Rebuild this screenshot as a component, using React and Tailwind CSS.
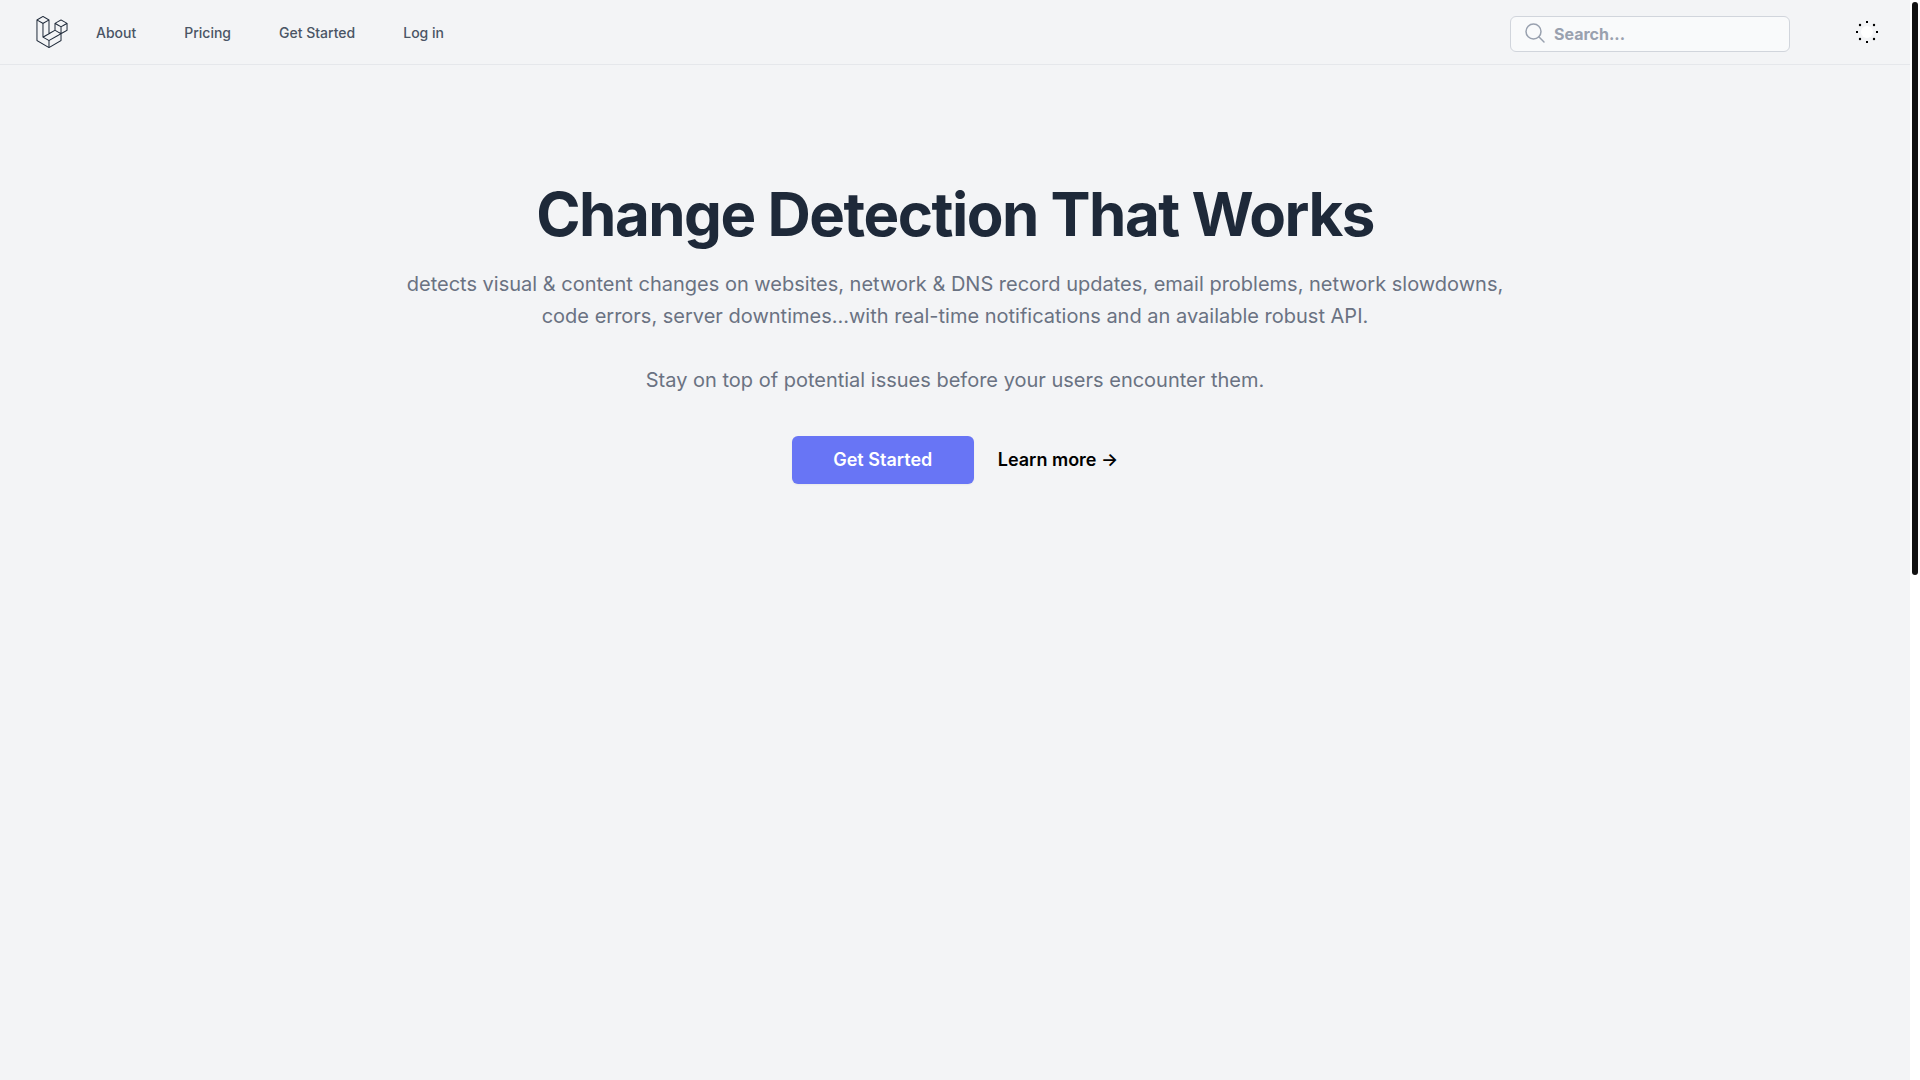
import { useState } from 'react';
import { SiLaravel } from 'react-icons/si';

const navLinks = [
    { label: 'About', href: '#about' },
    { label: 'Pricing', href: '#pricing' },
    { label: 'Get Started', href: '#get-started' },
    { label: 'Log in', href: '#login' },
];

function SearchIcon() {
    return (
        <svg className="size-6 shrink-0 text-gray-400" viewBox="0 0 24 24" fill="none" stroke="currentColor" strokeWidth="1.5" strokeLinecap="round" aria-hidden="true">
            <circle cx="10.5" cy="9.5" r="7.5" />
            <path d="m21 20-5.2-5.2" />
        </svg>
    );
}

function SunIcon() {
    return (
        <svg className="size-6" viewBox="0 0 24 24" aria-hidden="true">
            <circle cx="12" cy="12" r="6" fill="#fff" />
            <g fill="#000">
                <path d="M11 1h2v2h-2zM11 21h2v2h-2zM1 11h2v2H1zM21 11h2v2h-2z" />
                <circle cx="5" cy="5" r="1.2" />
                <circle cx="19" cy="5" r="1.2" />
                <circle cx="5" cy="19" r="1.2" />
                <circle cx="19" cy="19" r="1.2" />
            </g>
        </svg>
    );
}

function Header() {
    const [query, setQuery] = useState('');

    return (
        <header className="flex items-start border-b border-gray-200 pt-4 pb-3 pl-9 pr-[31px]">
            <a href="#home" aria-label="Home" className="text-gray-800">
                <SiLaravel className="size-8" />
            </a>
            <nav className="ml-7 flex gap-12">
                {navLinks.map((link) => (
                    <a key={link.label} href={link.href} className="text-sm leading-[34px] font-medium text-gray-600">
                        {link.label}
                    </a>
                ))}
            </nav>
            <label className="ml-auto flex h-9 w-70 items-center gap-[7px] rounded-md border border-gray-300 bg-gray-50 px-3">
                <SearchIcon />
                <input
                    type="text"
                    aria-label="Search"
                    value={query}
                    onChange={(e) => setQuery(e.target.value)}
                    placeholder="Search..."
                    className="w-full min-w-0 bg-transparent font-bold text-gray-800 placeholder:text-gray-400 outline-none"
                />
            </label>
            <button type="button" aria-label="Toggle theme" className="mt-1 ml-[65px]">
                <SunIcon />
            </button>
        </header>
    );
}

function Hero() {
    return (
        <main className="flex flex-col items-center px-6 pt-[119px] text-center">
            <h1 className="text-6xl font-bold leading-none tracking-tight text-gray-800">Change Detection That Works</h1>
            <p className="mt-6 max-w-6xl text-xl leading-8 text-gray-500">
                detects visual &amp; content changes on websites, network &amp; DNS record updates, email problems, network slowdowns,
                <br />
                code errors, server downtimes...with real-time notifications and an available robust API.
                <br />
                <br />
                Stay on top of potential issues before your users encounter them.
            </p>
            <div className="mt-10 flex items-center gap-6 text-lg font-semibold">
                <button type="button" className="h-12 w-[182px] rounded-md bg-[#6875f5] text-white shadow-xs">
                    Get Started
                </button>
                <a href="#learn-more" className="text-black">
                    Learn more <span aria-hidden="true">→</span>
                </a>
            </div>
        </main>
    );
}

export default function App() {
    return (
        <div className="flex min-h-screen bg-gray-100 font-['Inter',sans-serif]">
            <div className="min-w-0 flex-1">
                <Header />
                <Hero />
            </div>
            {/* scrollbar */}
            <div className="w-[10px] bg-white p-[2px]" aria-hidden="true">
                <div className="h-[573px] rounded-full bg-[#111]" />
            </div>
        </div>
    );
}
